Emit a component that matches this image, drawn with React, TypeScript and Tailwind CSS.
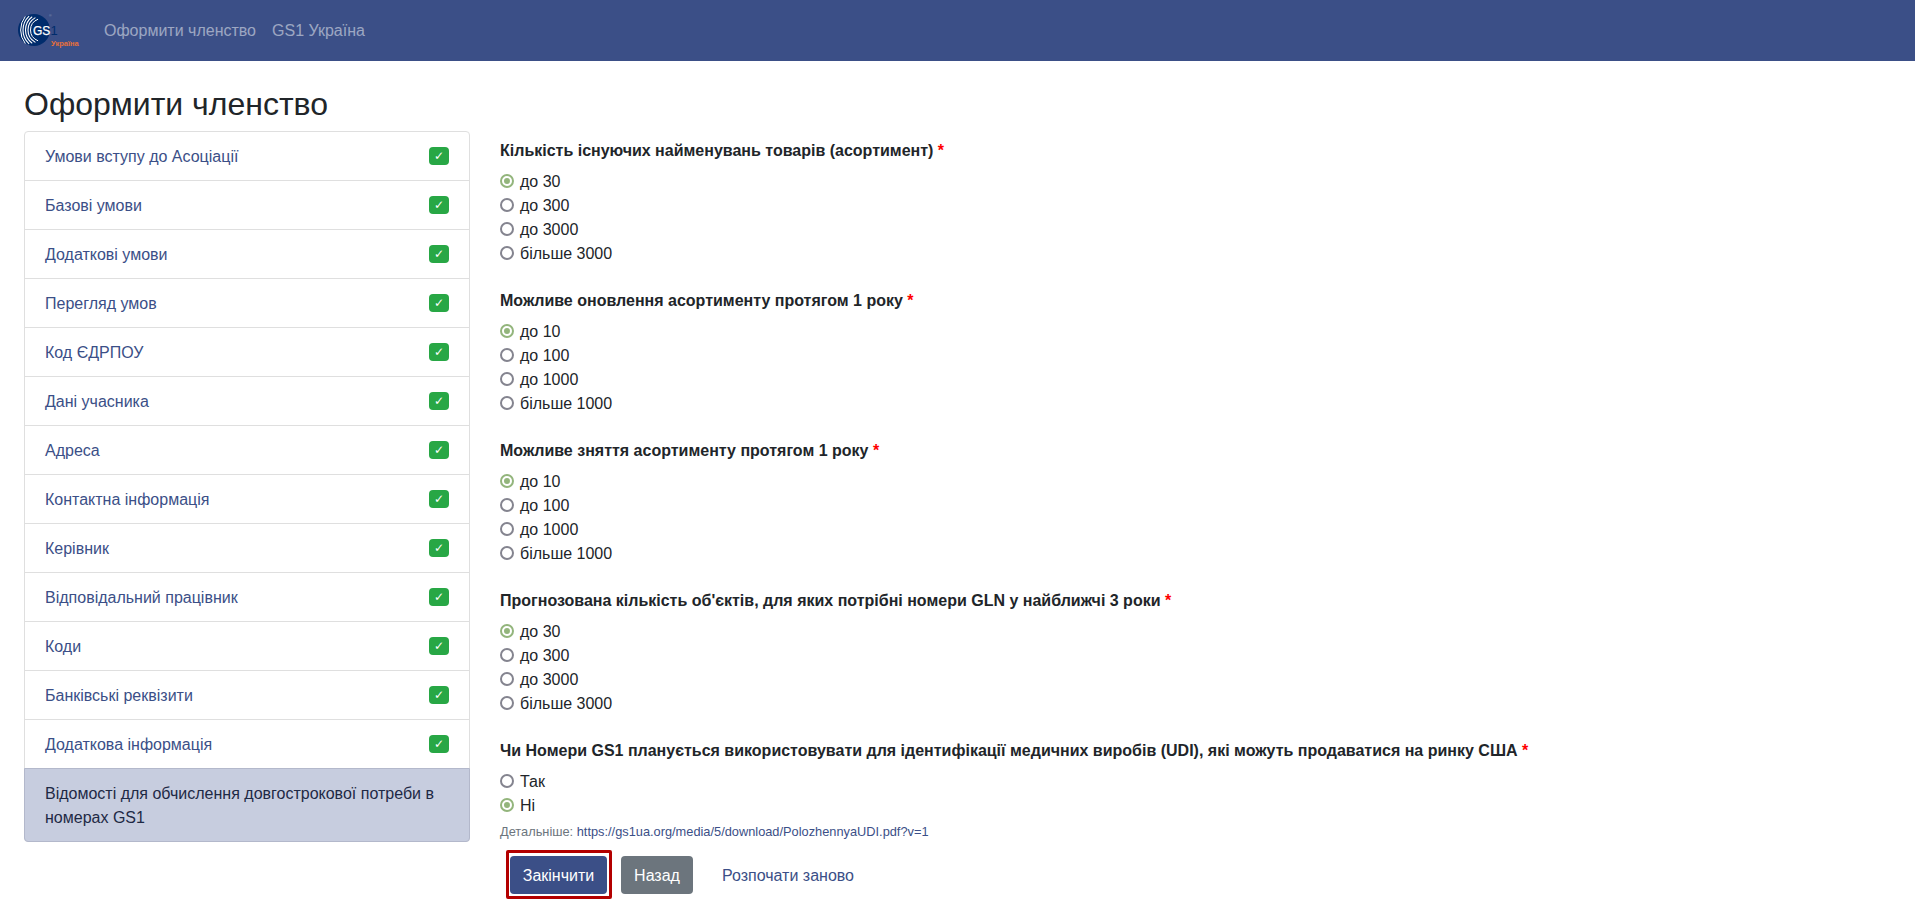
import React from "react";

const steps = [
  "Умови вступу до Асоціації",
  "Базові умови",
  "Додаткові умови",
  "Перегляд умов",
  "Код ЄДРПОУ",
  "Дані учасника",
  "Адреса",
  "Контактна інформація",
  "Керівник",
  "Відповідальний працівник",
  "Коди",
  "Банківські реквізити",
  "Додаткова інформація",
];

const questions = [
  { title: "Кількість існуючих найменувань товарів (асортимент)", options: ["до 30", "до 300", "до 3000", "більше 3000"], checked: 0 },
  { title: "Можливе оновлення асортименту протягом 1 року", options: ["до 10", "до 100", "до 1000", "більше 1000"], checked: 0 },
  { title: "Можливе зняття асортименту протягом 1 року", options: ["до 10", "до 100", "до 1000", "більше 1000"], checked: 0 },
  { title: "Прогнозована кількість об'єктів, для яких потрібні номери GLN у найближчі 3 роки", options: ["до 30", "до 300", "до 3000", "більше 3000"], checked: 0 },
  { title: "Чи Номери GS1 планується використовувати для ідентифікації медичних виробів (UDI), які можуть продаватися на ринку США", options: ["Так", "Ні"], checked: 1 },
];

function arc(r: number, deg: number) {
  const cx = 25;
  const cy = 17;
  const a = (deg * Math.PI) / 180;
  const dx = r * Math.cos(a);
  const dy = r * Math.sin(a);
  return `M${cx - dx} ${cy - dy}A${r} ${r} 0 0 0 ${cx - dx} ${cy + dy}`;
}

function Logo() {
  return (
    <svg width="68" height="36" viewBox="0 0 68 36" className="block">
      <circle cx="17" cy="17" r="16" fill="#002c6c" />
      <g fill="none" stroke="#ffffff" strokeLinecap="round">
        <path d={arc(21.5, 38)} strokeWidth="1" />
        <path d={arc(19, 46)} strokeWidth="1.1" />
        <path d={arc(16.5, 52)} strokeWidth="1.1" />
        <path d={arc(14, 60)} strokeWidth="1.1" />
        <path d={arc(11.5, 68)} strokeWidth="1" />
      </g>
      <text x="16" y="21.5" fill="#ffffff" fontSize="12" fontWeight="400" fontFamily="Liberation Sans, sans-serif" stroke="#ffffff" strokeWidth="0.25">GS</text>
      <text x="33.5" y="22" fill="#002c6c" fontSize="13" fontFamily="Liberation Sans, sans-serif">1</text>
      <text x="32" y="4" fill="#8d9bbd" fontSize="3.5" fontFamily="Liberation Sans, sans-serif">®</text>
      <text x="34" y="33" fill="#e8703a" fontSize="7.5" fontWeight="700" fontFamily="Liberation Sans, sans-serif">Україна</text>
    </svg>
  );
}

function Radio({ checked, label }: { checked: boolean; label: string }) {
  return (
    <div className="flex h-6 items-center">
      {checked ? (
        <span className="mb-[2px] flex h-[14px] w-[14px] items-center justify-center rounded-full border-2 border-[#93b57c] bg-white">
          <span className="h-[6px] w-[6px] rounded-full bg-[#93b57c]" />
        </span>
      ) : (
        <span className="mb-[2px] h-[14px] w-[14px] rounded-full border-2 border-[#84848f] bg-white" />
      )}
      <span className="ml-[6px] text-[#212529]">{label}</span>
    </div>
  );
}

export default function App() {
  return (
    <div className="min-h-[917px] bg-white text-[16px] leading-6 text-[#212529] [font-family:'Liberation_Sans',Arial,sans-serif]">
      <nav className="flex h-[61px] items-center bg-[#3b4f87] pl-[17px]">
        <Logo />
        <a className="ml-[19px] text-white/50">Оформити членство</a>
        <a className="ml-4 text-white/50">GS1 Україна</a>
      </nav>
      <div className="px-6">
        <h2 className="mb-2 mt-6 text-[32px] font-normal leading-[38px]">Оформити членство</h2>
        <div className="flex items-start">
          <aside className="w-[446px] shrink-0 rounded border border-[#dfdfdf]">
            {steps.map((s) => (
              <div key={s} className="flex h-[49px] items-center justify-between border-b border-[#dfdfdf] px-5 text-[#3b4f87]">
                <span className="mt-[2px]">{s}</span>
                <span className="flex h-[18px] w-5 items-center justify-center rounded bg-[#28a745] text-[12px] font-bold leading-none text-white [font-family:'DejaVu_Sans',sans-serif]">✓</span>
              </div>
            ))}
            <div className="-mx-px -mb-px -mt-px rounded-b border border-[#b3b8cb] bg-[#c7cddf] pb-[11px] pl-[20px] pr-5 pt-[13px] text-[#1e2945]">
              Відомості для обчислення довгострокової потреби в номерах GS1
            </div>
          </aside>
          <main className="ml-[30px] min-w-0 flex-1">
            <div className="pt-2">
              {questions.map((q, n) => (
                <section key={q.title} className={n < 4 ? "mb-[23px]" : ""}>
                  <div className="mb-[7px] font-bold">
                    {q.title} <span className="text-[#ff0000]">*</span>
                  </div>
                  {q.options.map((o, i) => (
                    <Radio key={o} label={o} checked={i === q.checked} />
                  ))}
                </section>
              ))}
              <p className="mt-1 text-[12.8px] leading-[19px] text-[#6c757d]">
                Детальніше: <a className="text-[#3b4f87]">https://gs1ua.org/media/5/download/PolozhennyaUDI.pdf?v=1</a>
              </p>
              <div className="mt-[15px] flex items-center">
                <div className="mb-[-5px] ml-[6px] mt-[-6px] rounded-[2px] border-[3px] border-[#b30000] pb-[2px] pl-px pr-[2px] pt-[3px]">
                  <button className="block h-[38px] w-[97px] rounded bg-[#3b4f87] pt-px text-white">Закінчити</button>
                </div>
                <button className="ml-[9px] h-[38px] w-[72px] rounded bg-[#6c757d] pt-px text-white">Назад</button>
                <a className="ml-[29px] mt-[2px] text-[#3b4f87]">Розпочати заново</a>
              </div>
            </div>
          </main>
        </div>
      </div>
    </div>
  );
}
